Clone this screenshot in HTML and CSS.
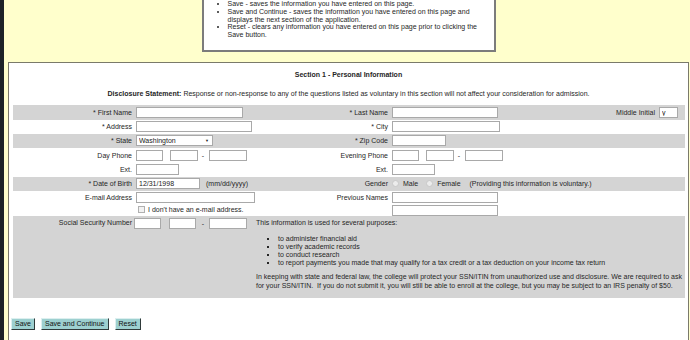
FILE: index.html
```html
<!doctype html>
<html lang="en">
  <head>
    <meta charset="UTF-8" />
    <meta name="viewport" content="width=device-width, initial-scale=1.0" />
    <title>Application - Section 1</title>
    <link rel="stylesheet" href="styles.css">
  </head>
  <body>
    <div class="edge"></div>
    <div class="page">
      <div class="help">
        <ul>
          <li>Save - saves the information you have entered on this page.</li>
          <li>Save and Continue - saves the information you have entered on this page and displays the next section of the application.</li>
          <li>Reset - clears any information you have entered on this page prior to clicking the Save button.</li>
        </ul>
      </div>

      <form class="panel" onsubmit="return false">
        <h2 class="section-title">Section 1 - Personal Information</h2>
        <p class="disclosure">
          <strong>Disclosure Statement:</strong> Response or non-response to any of the questions listed as voluntary in this section will not affect your consideration for admission.
        </p>

        <div class="rows">
          <div class="row shaded tall">
            <label class="lbl">* First Name</label>
            <div class="fld"><input type="text" class="w-first"></div>
            <label class="lbl">* Last Name</label>
            <div class="fld"><input type="text" class="w-last"></div>
            <label class="lbl">Middle Initial</label>
            <div class="fld"><input type="text" class="w-mi" value="y"></div>
          </div>

          <div class="row">
            <label class="lbl">* Address</label>
            <div class="fld"><input type="text" class="w-long"></div>
            <label class="lbl">* City</label>
            <div class="fld"><input type="text" class="w-city"></div>
          </div>

          <div class="row shaded">
            <label class="lbl">* State</label>
            <div class="fld">
              <span class="select-wrap">
                <select class="w-state"><option>Washington</option></select>
                <span class="arrow">▼</span>
              </span>
            </div>
            <label class="lbl">* Zip Code</label>
            <div class="fld"><input type="text" class="w-zip"></div>
          </div>

          <div class="row tall">
            <label class="lbl">Day Phone</label>
            <div class="fld phone">
              <input type="text" class="w-area">
              <input type="text" class="w-pre">
              <span class="dash">-</span>
              <input type="text" class="w-num">
            </div>
            <label class="lbl">Evening Phone</label>
            <div class="fld phone">
              <input type="text" class="w-area">
              <input type="text" class="w-pre">
              <span class="dash">-</span>
              <input type="text" class="w-num">
            </div>
          </div>

          <div class="row">
            <label class="lbl">Ext.</label>
            <div class="fld"><input type="text" class="w-ext"></div>
            <label class="lbl">Ext.</label>
            <div class="fld"><input type="text" class="w-ext"></div>
          </div>

          <div class="row shaded">
            <label class="lbl">* Date of Birth</label>
            <div class="fld">
              <input type="text" class="w-dob" value="12/31/1998">
              <span class="hint">(mm/dd/yyyy)</span>
            </div>
            <label class="lbl">Gender</label>
            <div class="fld gender">
              <input type="radio" name="gender"><span>Male</span>
              <input type="radio" name="gender"><span>Female</span>
              <span class="note">(Providing this information is voluntary.)</span>
            </div>
          </div>

          <div class="row double">
            <label class="lbl">E-mail Address</label>
            <div class="fld stack">
              <input type="text" class="w-long">
              <label class="check"><input type="checkbox"> I don't have an e-mail address.</label>
            </div>
            <label class="lbl">Previous Names</label>
            <div class="fld stack">
              <input type="text" class="w-last">
              <input type="text" class="w-last">
            </div>
          </div>

          <div class="row shaded ssn">
            <label class="lbl">Social Security Number</label>
            <div class="fld phone">
              <input type="text" class="w-area">
              <input type="text" class="w-area">
              <span class="dash">-</span>
              <input type="text" class="w-num">
            </div>
            <div class="ssn-info">
              <p>This information is used for several purposes:</p>
              <ul>
                <li>to administer financial aid</li>
                <li>to verify academic records</li>
                <li>to conduct research</li>
                <li>to report payments you made that may qualify for a tax credit or a tax deduction on your income tax return</li>
              </ul>
              <p class="law">In keeping with state and federal law, the college will protect your SSN/ITIN from unauthorized use and disclosure. We are required to ask<br>for your SSN/ITIN.&nbsp; If you do not submit it, you will still be able to enroll at the college, but you may be subject to an IRS penalty of $50.</p>
            </div>
          </div>
        </div>

        <div class="actions">
          <button type="submit" class="btn">Save</button>
          <button type="submit" class="btn">Save and Continue</button>
          <button type="reset" class="btn">Reset</button>
        </div>
      </form>
    </div>
  </body>
</html>
```

FILE: styles.css
```css
* {
  box-sizing: border-box;
}
body {
  margin: 0;
  display: flex;
  min-height: 100vh;
  overflow: hidden;
  background: #ffffcc;
  font-family: 'Liberation Sans', Arial, sans-serif;
  font-size: 7px;
  color: #262626;
}
.edge {
  width: 4px;
  flex: none;
  background: #1d2327;
}
.page {
  flex: 1;
  padding: 0 1px 0 4px;
}
.help {
  width: 294px;
  margin: -10px auto 0;
  padding: 8px 6px 11px 0;
  background: #fff;
  border: 2px solid #7c7c7c;
}
.help ul {
  margin: 0;
  padding-left: 24px;
  line-height: 7.8px;
}
.panel {
  margin-top: 10px;
  min-height: 300px;
  background: #fff;
  border: 1px solid #7a7a6a;
}
.section-title {
  margin: 7px 0 0;
  font-size: 7px;
  line-height: 9px;
  text-align: center;
}
.disclosure {
  margin: 10px 0 7px;
  line-height: 9px;
  text-align: center;
}
.rows {
  margin: 0 3px 0 4px;
}
.row {
  display: grid;
  grid-template-columns: 121px 118px 138px 210px 57px 28px;
  height: 14px;
  align-items: center;
}
.shaded {
  background: #d4d4d4;
}
.tall {
  height: 15px;
}
.lbl {
  padding-right: 2px;
  text-align: right;
  white-space: nowrap;
}
.fld {
  display: flex;
  align-items: center;
  padding-left: 2px;
  white-space: nowrap;
}
input[type='text'],
select {
  height: 11px;
  margin: 0;
  padding: 0 2px;
  border: 1px solid #a9a9a9;
  border-radius: 0;
  background: #fff;
  font: inherit;
  color: #222;
  outline: none;
}
.w-first { width: 107px; }
.w-last { width: 106px; }
.w-mi { width: 19px; }
.w-long { width: 119px; }
.w-city { width: 108px; }
.w-zip { width: 54px; }
.w-ext { width: 43px; }
.w-dob { width: 64px; }
.w-area { width: 27px; }
.w-pre { width: 28px; }
.w-num { width: 38px; }

.select-wrap {
  position: relative;
  display: inline-flex;
}
.w-state {
  width: 77px;
  appearance: none;
  -webkit-appearance: none;
  line-height: 9px;
}
.arrow {
  position: absolute;
  right: 4px;
  top: 3px;
  font-size: 4px;
  line-height: 5px;
  color: #222;
  pointer-events: none;
}
.phone input:first-child {
  margin-right: 7px;
}
.phone .dash {
  width: 4px;
  margin: 0 4px 0 3px;
  text-align: center;
}
.hint {
  margin-left: 6px;
}
.gender input[type='radio'] {
  appearance: none;
  -webkit-appearance: none;
  width: 7px;
  height: 7px;
  margin: 0 4px 0 0;
  border: 1px solid #c8c8c8;
  border-radius: 50%;
  background: #ececec;
}
.gender span {
  margin-right: 8px;
}
.gender .note {
  margin-left: 1px;
}
.double {
  height: 25px;
  align-items: start;
}
.double .lbl {
  padding-top: 1px;
  line-height: 11px;
}
.stack {
  flex-direction: column;
  align-items: flex-start;
  gap: 2px;
  padding-top: 1px;
}
.check {
  display: flex;
  align-items: center;
  padding-left: 2px;
  line-height: 9px;
}
.check input {
  appearance: none;
  -webkit-appearance: none;
  width: 7px;
  height: 7px;
  margin: 0 3px 0 0;
  border: 1px solid #b0b0b0;
  background: #f2f2f2;
}
.ssn {
  height: 82px;
  align-items: start;
}
.ssn .lbl {
  padding-top: 3px;
  line-height: 8px;
}
.ssn .fld {
  padding-top: 2px;
  padding-left: 0;
}
.ssn input:first-child {
  margin-right: 8px;
}
.ssn .dash {
  margin: 0 4px 0 5px;
}
.ssn-info {
  grid-column: 3 / -1;
  padding: 3px 0 0 4px;
  line-height: 8px;
}
.ssn-info p {
  margin: 0;
}
.ssn-info ul {
  margin: 8px 0 0;
  padding-left: 22px;
  list-style: square;
}
.ssn-info .law {
  margin-top: 5px;
  line-height: 9.5px;
  white-space: nowrap;
}
.actions {
  display: flex;
  gap: 6px;
  margin-top: 20px;
  padding-left: 2px;
}
.btn {
  height: 12px;
  padding: 0 3px;
  border: 1px solid;
  border-color: #dcefef #2f3a3a #2f3a3a #dcefef;
  background: #9dd0d0;
  font: inherit;
  line-height: 10px;
  color: #111;
  cursor: pointer;
}
```
